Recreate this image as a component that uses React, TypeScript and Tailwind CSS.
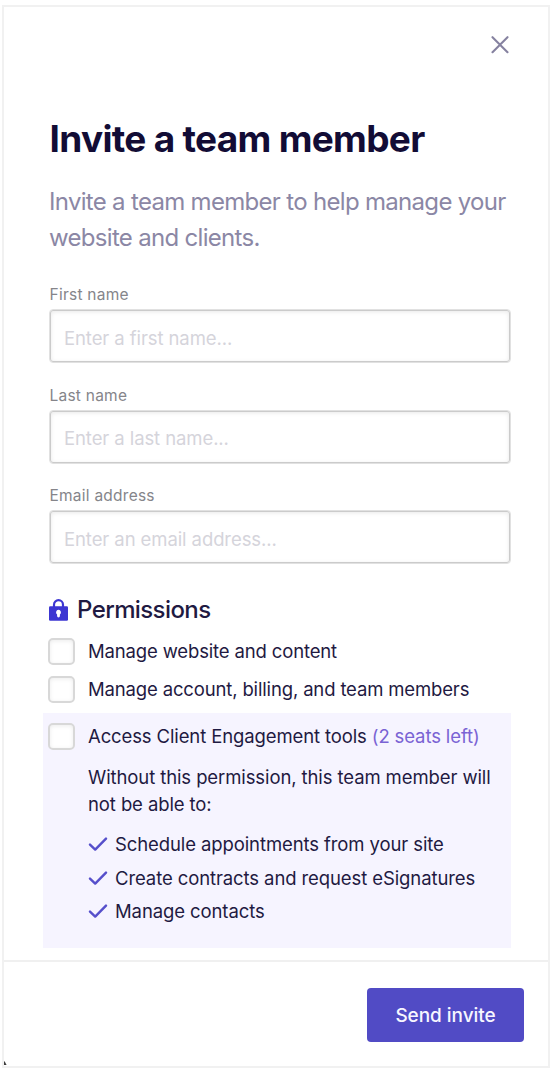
import React from "react";

function Field({ label, placeholder }: { label: string; placeholder: string }) {
  return (
    <label className="mb-[21.5px] block h-[79px]">
      <span className="block h-[25px] pl-[0.5px] pt-px text-[15.5px] leading-[20px] tracking-[0.24px] text-[#85858a]">{label}</span>
      <span className="block h-[54px] rounded-[4px] border border-[#e1e1e1]">
        <input
          placeholder={placeholder}
          className="block h-[52px] w-full rounded-[3px] border border-[#cbcbcb] px-[13px] pt-[3px] text-[18.5px] tracking-[-0.09px] shadow-[inset_0_1px_4px_rgba(0,0,0,0.09)] outline-none placeholder:text-[#d5d4db]"
        />
      </span>
    </label>
  );
}

function Box() {
  return (
    <span className="size-[27px] shrink-0 rounded-[5px] border-2 border-[#d8d8d8] bg-white shadow-[inset_0_1px_4px_rgba(0,0,0,0.08)]" />
  );
}

function Tick() {
  return (
    <svg className="h-[15px] w-[20px] shrink-0" viewBox="0 0 20 15" fill="none" stroke="#564fcb" strokeWidth="2.4" strokeLinecap="round" strokeLinejoin="round">
      <path d="M2 7.6 7.2 12.6 18 1.6" />
    </svg>
  );
}

const tools = ["Schedule appointments from your site", "Create contracts and request eSignatures", "Manage contacts"];

export default function App() {
  return (
    <div className="h-[1072px] w-[554px] bg-white pl-[2px] pt-[5px] font-['Inter',sans-serif] text-[#1f1a42]">
      <div className="relative flex h-[1063px] w-[548px] flex-col border-2 border-[#f1f1f1]">
        <div className="h-[953px] pl-[45px] pr-[39px]">
          <div className="flex h-[104px] justify-end pt-[29px]">
            <button aria-label="Close" className="h-[18px]">
              <svg className="size-[18px]" viewBox="0 0 18 18" stroke="#8682a0" strokeWidth="2.1" strokeLinecap="round">
                <path d="M1.5 1.2 16.5 16.2M16.5 1.2 1.5 16.2" />
              </svg>
            </button>
          </div>
          <h1 className="h-[73px] whitespace-nowrap pl-[0.5px] pt-px text-[37px] font-bold leading-[54px] tracking-[-0.69px] text-[#120c35]">Invite a team member</h1>
          <p className="h-[100px] whitespace-nowrap text-[24px] leading-[36px] tracking-[-0.69px] text-[#8b87a5]">
            Invite a team member to help manage your
            <br />
            website and clients.
          </p>
          <div className="h-[301px] w-[462px]">
            <Field label="First name" placeholder="Enter a first name..." />
            <Field label="Last name" placeholder="Enter a last name..." />
            <Field label="Email address" placeholder="Enter an email address..." />
          </div>
          <h2 className="flex h-[53px] items-center gap-[9px] pb-[4px] text-[24px] font-medium tracking-[-0.6px]">
            <svg className="h-[22px] w-[19px]" viewBox="0 0 19 22">
              <path d="M5 9V5.7a4.5 4.5 0 0 1 9 0V9" fill="none" stroke="#3c36d2" strokeWidth="2.2" />
              <rect y="7.2" width="19" height="14.6" rx="1.2" fill="#3c36d2" />
              <path d="M9.5 10.8a2.6 2.6 0 0 1 1.4 4.7V17a1.4 1.4 0 0 1-2.8 0v-1.5A2.6 2.6 0 0 1 9.5 10.8Z" fill="#fff" />
            </svg>
            Permissions
          </h2>
          <div className="-ml-px whitespace-nowrap tracking-[-0.15px]">
            <div className="flex h-[37.5px] items-start gap-[13px] text-[18.5px] leading-[27px]">
              <Box />
              Manage website and content
            </div>
            <div className="flex h-[37.5px] items-start gap-[13px] text-[18.5px] leading-[27px]">
              <Box />
              Manage account, billing, and team members
            </div>
          </div>
          <section className="-ml-[6px] h-[235px] w-[468px] whitespace-nowrap bg-[#f6f4ff] pl-[5px] pt-[10px] text-[18.5px] leading-[27px] tracking-[-0.1px]">
            <div className="flex gap-[13px]">
              <Box />
              <span className="tracking-[-0.12px]">
                Access Client Engagement tools <span className="text-[#7a63d4]">(2 seats left)</span>
              </span>
            </div>
            <div className="pl-[40px] pt-[14px]">
              <p>
                Without this permission, this team member will
                <br />
                not be able to:
              </p>
              <ul className="mt-[10px]">
                {tools.map((text) => (
                  <li key={text} className="flex h-[33.5px] items-center gap-[7px]">
                    <Tick />
                    {text}
                  </li>
                ))}
              </ul>
            </div>
          </section>
        </div>
        <footer className="flex flex-1 items-start justify-end border-t-2 border-[#f0f0f0] pr-[24px] pt-[26px]">
          <button className="h-[54px] w-[157px] rounded-[4px] bg-[#514bc5] pt-[2px] text-[19px] font-medium tracking-[-0.05px] text-[#f7f6ff]">Send invite</button>
        </footer>
        <svg className="absolute bottom-px left-0 h-[4px] w-[3px]" viewBox="0 0 3 4">
          <path d="M0 0 1 1 2.6 4H0Z" fill="#3b3b3b" />
        </svg>
      </div>
    </div>
  );
}
